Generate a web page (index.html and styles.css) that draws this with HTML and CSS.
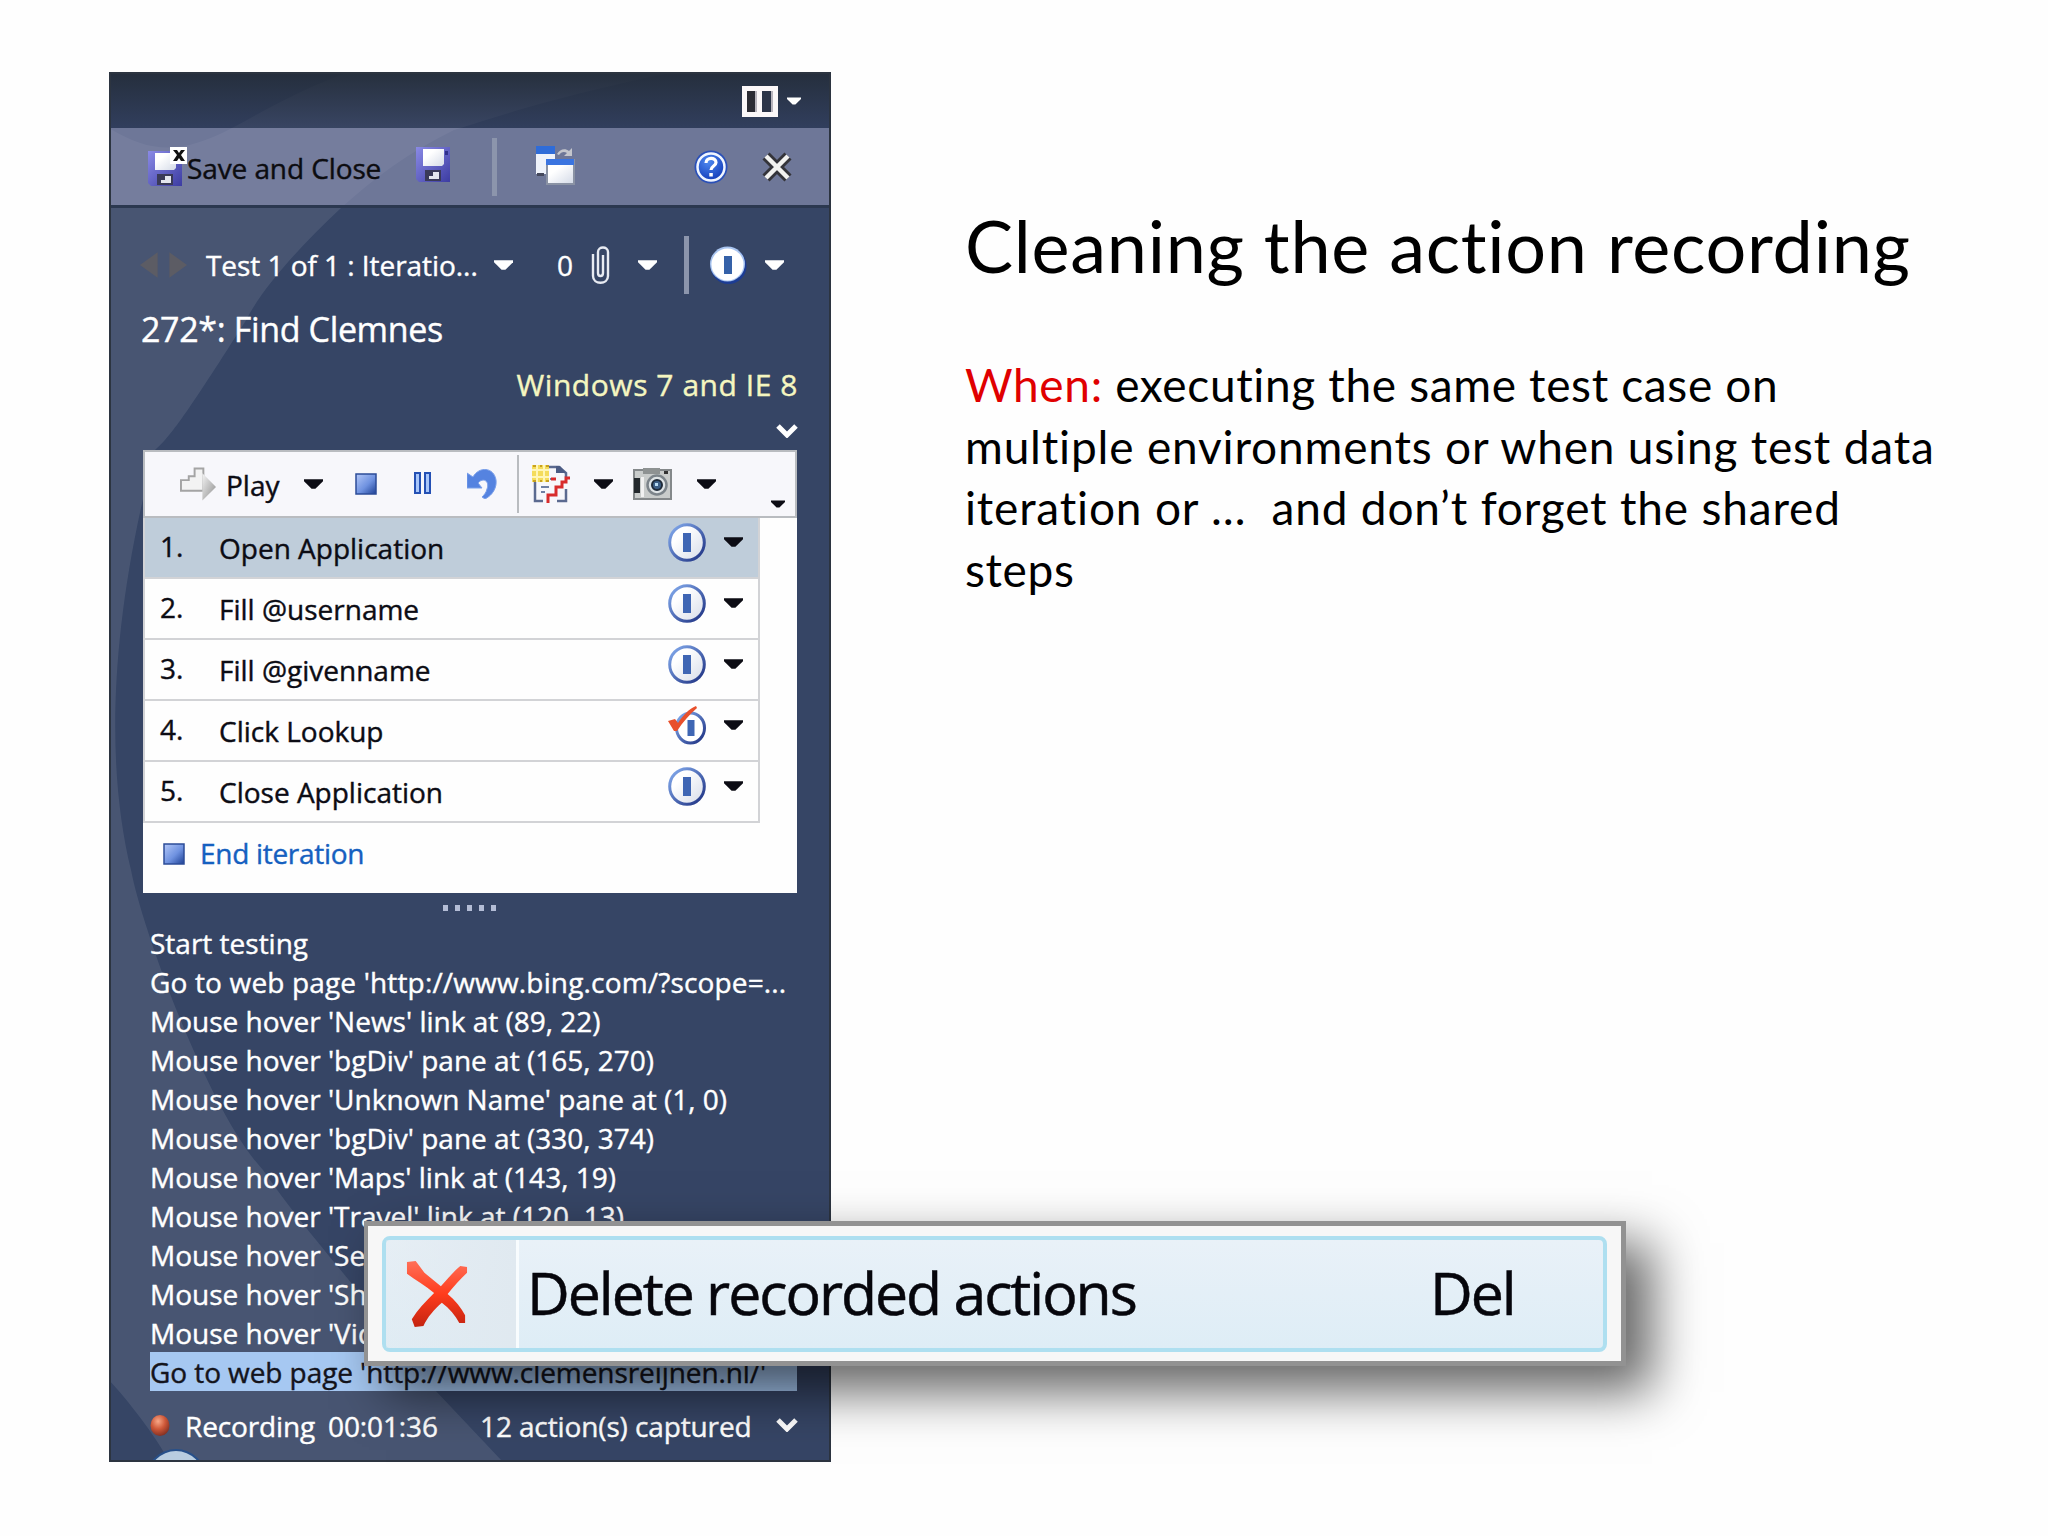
FILE: index.html
```html
<!DOCTYPE html>
<html lang="en">
<head>
    <meta charset="utf-8">
    <title>Cleaning the action recording</title>
    <link rel="stylesheet" href="styles.css">
</head>
<body>
    <!-- shared icons -->
    <svg class="defs" width="0" height="0">
        <defs>
            <linearGradient id="blueSquare" x1="0" y1="0" x2="1" y2="1">
                <stop offset="0" stop-color="#b4c8f8"/>
                <stop offset="0.55" stop-color="#6f92e0"/>
                <stop offset="1" stop-color="#1c3f94"/>
            </linearGradient>
            <linearGradient id="floppy" x1="0" y1="0" x2="1" y2="1">
                <stop offset="0" stop-color="#8a8ae6"/>
                <stop offset="1" stop-color="#3c3ca2"/>
            </linearGradient>
            <linearGradient id="ring" x1="0" y1="0" x2="1" y2="1">
                <stop offset="0" stop-color="#86aef0"/>
                <stop offset="1" stop-color="#1c2f80"/>
            </linearGradient>
            <linearGradient id="paper" x1="0" y1="0" x2="1" y2="1">
                <stop offset="0.3" stop-color="#ffffff"/>
                <stop offset="1" stop-color="#d5dbe8"/>
            </linearGradient>
            <linearGradient id="grey" x1="0" y1="0" x2="1" y2="1">
                <stop offset="0" stop-color="#f4f4f4"/>
                <stop offset="1" stop-color="#8c8c8c"/>
            </linearGradient>
            <linearGradient id="redX" x1="0" y1="0" x2="0" y2="1">
                <stop offset="0" stop-color="#ff7058"/>
                <stop offset="0.5" stop-color="#ff3c1c"/>
                <stop offset="1" stop-color="#c42410"/>
            </linearGradient>
            <radialGradient id="helpBlue" cx="0.4" cy="0.3" r="0.8">
                <stop offset="0" stop-color="#4f8af0"/>
                <stop offset="1" stop-color="#0c34b4"/>
            </radialGradient>
            <radialGradient id="recRed" cx="0.4" cy="0.3" r="0.75">
                <stop offset="0" stop-color="#f8a888"/>
                <stop offset="0.5" stop-color="#cf5838"/>
                <stop offset="1" stop-color="#7c2c20"/>
            </radialGradient>
        </defs>
        <symbol id="caret" viewBox="0 0 20 10">
            <path d="M0 0H20V2L12 10H8L0 2Z" fill="currentColor"/>
        </symbol>
        <symbol id="chevron" viewBox="0 0 22 14">
            <path d="M2 2L11 11L20 2" fill="none" stroke="currentColor" stroke-width="5"/>
        </symbol>
        <symbol id="disk" viewBox="0 0 34 35">
            <path d="M0 0H34V35H3L0 32Z" fill="url(#floppy)"/>
            <path d="M7 2H28V17L26 19H7Z" fill="url(#paper)"/>
            <rect x="9" y="23" width="16" height="11" fill="#3a3a58"/>
            <path d="M17 25H23V32H13V29H17Z" fill="#e4e6ee"/>
            <rect x="29" y="4" width="3" height="4" fill="#30308c"/>
        </symbol>
        <symbol id="step" viewBox="0 0 38 39">
            <ellipse cx="19" cy="19.5" rx="17.3" ry="17.8" fill="url(#paper)" stroke="url(#ring)" stroke-width="3"/>
            <rect x="15" y="10" width="8" height="19" fill="#3f66b4"/>
        </symbol>
        <symbol id="stepDone" viewBox="0 0 38 39">
            <ellipse cx="22.5" cy="22" rx="14" ry="15" fill="#fff" stroke="url(#ring)" stroke-width="3"/>
            <rect x="19.500" y="14" width="7" height="16" fill="#3f66b4"/>
            <path d="M0 15L7 13L10 17C15 9 21 3 28 0L29 2C21 9 15 16 9 25H6Z" fill="#e8502c"/>
        </symbol>
    </svg>

    <div class="slide">
        <div class="panel">
            <svg class="panel-art" viewBox="0 0 721 1389">
                <path d="M0 56C40 80 70 84 123 56C170 30 205 12 240 0H565C470 20 420 34 345 58C300 80 265 106 232 136C180 185 150 222 136 250C85 330 62 365 46 378C-2 560 -2 700 22 798C34 860 100 1040 154 1098C200 1165 250 1215 326 1318L393 1389H60C50 1370 25 1335 0 1308Z" fill="#ffffff" fill-opacity="0.09"/>
            </svg>

            <div class="titlebar">
                <svg class="layout-icon" viewBox="0 0 36 31">
                    <rect width="36" height="31" fill="#fbf7f8"/>
                    <rect x="5" y="5" width="9" height="21" fill="#2c2c34"/>
                    <rect x="20" y="5" width="11" height="21" fill="#2c3448"/>
                    <path d="M13 5H15V26H13ZM29 5H31V26H29Z" fill="#b8b4bc"/>
                </svg>
                <svg class="caret small"><use href="#caret"/></svg>
            </div>

            <div class="toolbar">
                <svg class="save-close-icon" viewBox="0 0 39 39">
                    <svg y="4" width="34" height="35"><use href="#disk"/></svg>
                    <rect x="22" y="0" width="17" height="17" fill="#fff"/>
                    <path d="M25 3H29L31 6L33 3H37L33 8L37 14H33L31 11L29 14H25L29 8Z" fill="#111"/>
                </svg>
                <span class="save-close">Save and Close</span>
                <svg class="save-icon"><use href="#disk"/></svg>
                <span class="divider"></span>
                <svg class="windows-icon" viewBox="0 0 39 39">
                    <rect x="0" y="0" width="19" height="28" fill="#eef2fa"/>
                    <rect x="0" y="0" width="19" height="8" fill="#2f6cd8"/>
                    <rect x="1" y="27" width="7" height="3" fill="#44485c"/>
                    <path d="M21 8C24 3 29 2 33 5L36 2V10H28L31 7C28 5 25 6 23 9Z" fill="#c4c6cc"/>
                    <rect x="10" y="13" width="29" height="26" fill="#8a92a4"/>
                    <rect x="12" y="19" width="25" height="18" fill="url(#paper)"/>
                    <rect x="10" y="13" width="28" height="6" fill="#3a74e0"/>
                </svg>
                <svg class="help-icon" viewBox="0 0 34 34">
                    <circle cx="17" cy="17" r="16.500" fill="#2a50b8"/>
                    <circle cx="17" cy="17" r="13.500" fill="url(#helpBlue)" stroke="#f0f6ff" stroke-width="2.500"/>
                    <path d="M12 13C12 7 22 7 22 12.500C22 16 17 16 17 20" fill="none" stroke="#fff" stroke-width="3.200"/>
                    <rect x="15.300" y="23" width="3.500" height="3.500" fill="#fff"/>
                </svg>
                <svg class="close-icon" viewBox="0 0 30 30">
                    <path d="M4 4L26 26M26 4L4 26" stroke="#34343a" stroke-width="10"/>
                    <path d="M4 4L26 26M26 4L4 26" stroke="#f2f2f0" stroke-width="4.500"/>
                </svg>
            </div>

            <div class="nav">
                <svg class="nav-arrows" viewBox="0 0 48 26">
                    <path d="M0 13L18 0V26ZM48 13L30 0V26Z" fill="#5c5c64"/>
                </svg>
                <span class="test-name">Test 1 of 1 : Iteratio...</span>
                <svg class="caret"><use href="#caret"/></svg>
                <span class="attach-count">0</span>
                <svg class="clip" viewBox="0 0 19 38">
                    <path d="M2 8V30C2 39 17 39 17 30V6C17 0 7 0 7 6V27C7 31 12 31 12 27V9" fill="none" stroke="#e8ebf2" stroke-width="2.400"/>
                </svg>
                <svg class="caret caret-attach"><use href="#caret"/></svg>
                <span class="divider"></span>
                <svg class="status-icon" viewBox="0 0 38 38">
                    <circle cx="19.500" cy="20" r="18" fill="#1c3c94"/>
                    <circle cx="18.500" cy="18" r="17.500" fill="#a8c4f0"/>
                    <circle cx="18.500" cy="18.500" r="16" fill="#fff"/>
                    <rect x="15" y="10" width="8" height="18" fill="#3561a8"/>
                </svg>
                <svg class="caret caret-status"><use href="#caret"/></svg>
            </div>

            <div class="case-title">272*: Find Clemnes</div>
            <div class="config">Windows 7 and IE 8</div>
            <div class="expander"><svg class="chevron"><use href="#chevron"/></svg></div>

            <div class="steps">
                <div class="play-bar">
                    <svg class="play-icon" viewBox="0 0 38 34">
                        <path d="M1 13H9V9H15V1H24V7L24 24H1Z" fill="#f3f3f3" stroke="#a4a4a4" stroke-width="2"/>
                        <path d="M23 6L37 20L23 34Z" fill="url(#grey)"/>
                    </svg>
                    <span class="play-label">Play</span>
                    <svg class="caret"><use href="#caret"/></svg>
                    <svg class="stop-icon" viewBox="0 0 22 22">
                        <rect x="1" y="1" width="20" height="20" fill="url(#blueSquare)" stroke="#2c4c98" stroke-width="1.500"/>
                    </svg>
                    <svg class="pause-icon" viewBox="0 0 17 22">
                        <path d="M1 1H6V21H1ZM11 1H16V21H11Z" fill="#a8c6fa" stroke="#2450b4" stroke-width="2"/>
                    </svg>
                    <svg class="undo-icon" viewBox="0 0 30 30">
                        <path d="M0 4V19H15L11 14C16 8 23 12 20 20C19 24 17 26 15 28L18 30C26 26 30 18 29 11C27 -2 12 -3 6 8Z" fill="#5583e0" stroke="#7ba0ea" stroke-width="1"/>
                    </svg>
                    <span class="bar-line"></span>
                    <svg class="bug-icon" viewBox="0 0 38 38">
                        <path d="M3 14V36H11M25 36H34V24M34 12V8L27 2H16" fill="none" stroke="#5b6a90" stroke-width="2.500"/>
                        <path d="M24 1H28L34 8H24Z" fill="#4c5c84"/>
                        <path d="M9 22H17M9 27H13M18 14H24" stroke="#6f80a4" stroke-width="2"/>
                        <rect x="0" y="0" width="17" height="17" fill="#f4dc5c"/>
                        <path d="M0 5H17M0 12H17M5 0V17M12 0V17" stroke="#fff6b8" stroke-width="2"/>
                        <path d="M1 1H4M8 1H10M14 1H17M1 16H4M8 16H10M14 16H17" stroke="#c8a020" stroke-width="2"/>
                        <path d="M38 13H34V17H30V22H24V30H16V38M19 14H24" fill="none" stroke="#d82c2c" stroke-width="3"/>
                    </svg>
                    <svg class="caret caret-bug"><use href="#caret"/></svg>
                    <svg class="camera-icon" viewBox="0 0 39 32">
                        <rect x="1" y="2" width="37" height="29" fill="#c9cccb" stroke="#84888a" stroke-width="2"/>
                        <rect x="10" y="0" width="17" height="6" fill="#8e9292"/>
                        <rect x="1" y="10" width="6" height="15" fill="#23282c"/>
                        <rect x="31" y="3" width="4" height="3" fill="#333"/>
                        <rect x="8" y="9" width="3" height="20" fill="#f1f1f1"/>
                        <circle cx="24" cy="17" r="9.500" fill="#dfe4e6" stroke="#7c848a" stroke-width="2.500"/>
                        <circle cx="24" cy="17" r="5" fill="#3d5f86" stroke="#1e2a38" stroke-width="2"/>
                        <rect x="22" y="15" width="3" height="3" fill="#b8dcf4"/>
                    </svg>
                    <svg class="caret caret-camera"><use href="#caret"/></svg>
                    <svg class="caret overflow"><use href="#caret"/></svg>
                </div>

                <div class="step-list">
                    <div class="step selected">
                        <span class="num">1.</span><span class="name">Open Application</span>
                        <svg class="step-icon"><use href="#step"/></svg><svg class="caret"><use href="#caret"/></svg>
                    </div>
                    <div class="step">
                        <span class="num">2.</span><span class="name">Fill @username</span>
                        <svg class="step-icon"><use href="#step"/></svg><svg class="caret"><use href="#caret"/></svg>
                    </div>
                    <div class="step">
                        <span class="num">3.</span><span class="name">Fill @givenname</span>
                        <svg class="step-icon"><use href="#step"/></svg><svg class="caret"><use href="#caret"/></svg>
                    </div>
                    <div class="step">
                        <span class="num">4.</span><span class="name">Click Lookup</span>
                        <svg class="step-icon"><use href="#stepDone"/></svg><svg class="caret"><use href="#caret"/></svg>
                    </div>
                    <div class="step">
                        <span class="num">5.</span><span class="name">Close Application</span>
                        <svg class="step-icon"><use href="#step"/></svg><svg class="caret"><use href="#caret"/></svg>
                    </div>
                </div>

                <div class="end-iteration">
                    <svg class="stop-icon" viewBox="0 0 22 22">
                        <rect x="1" y="1" width="20" height="20" fill="url(#blueSquare)" stroke="#2c4c98" stroke-width="1.500"/>
                    </svg>
                    <span>End iteration</span>
                </div>
            </div>

            <div class="grip"><i></i><i></i><i></i><i></i><i></i></div>

            <ul class="log">
                <li>Start testing</li>
                <li class="wide">Go to web page 'http://www.bing.com/?scope=...</li>
                <li>Mouse hover 'News' link at (89, 22)</li>
                <li>Mouse hover 'bgDiv' pane at (165, 270)</li>
                <li>Mouse hover 'Unknown Name' pane at (1, 0)</li>
                <li>Mouse hover 'bgDiv' pane at (330, 374)</li>
                <li>Mouse hover 'Maps' link at (143, 19)</li>
                <li>Mouse hover 'Travel' link at (120, 13)</li>
                <li>Mouse hover 'Se</li>
                <li>Mouse hover 'Sh</li>
                <li>Mouse hover 'Vid</li>
                <li class="current">Go to web page 'http://www.clemensreijnen.nl/'</li>
            </ul>

            <div class="recording">
                <svg class="rec-dot" viewBox="0 0 20 21"><ellipse cx="10" cy="10.500" rx="9.500" ry="10.500" fill="url(#recRed)"/></svg>
                <span class="rec-label">Recording</span>
                <span class="rec-time">00:01:36</span>
                <span class="rec-count">12 action(s) captured</span>
                <svg class="chevron"><use href="#chevron"/></svg>
            </div>
            <div class="orb"></div>
        </div>

        <div class="notes">
            <h1>Cleaning the action recording</h1>
            <p>
                <span class="line"><em>When:</em> executing the same test case on</span>
                <span class="line long">multiple environments or when using test data</span>
                <span class="line long">iteration or …&nbsp; and don’t forget the shared</span>
                <span class="line">steps</span>
            </p>
        </div>
    </div>

    <!-- enlarged context menu entry, lies over the panel -->
    <div class="popup">
        <div class="menu-item">
            <div class="gutter">
                <svg class="delete-icon" viewBox="0 0 64 68">
                    <path d="M1 1L10 0L19 12L36 26C43 18 50 10 56 5L63 6V12C56 19 49 26 43 34C51 41 57 48 61 56V64H55C51 56 45 49 37 43C29 50 22 58 18 67L9 68L6 60C12 50 20 42 29 33C20 25 10 20 1 13Z" fill="url(#redX)"/>
                </svg>
            </div>
            <span class="menu-label">Delete recorded actions</span>
            <span class="menu-key">Del</span>
        </div>
    </div>
</body>
</html>
```
FILE: styles.css
```css
body {
    margin: 0;
    width: 2048px;
    height: 1536px;
    background-color: #fefefe;
    font-family: 'Open Sans', 'Noto Sans', sans-serif;
    overflow: hidden;
    position: relative;
}

svg {
    display: block;
    flex: none;
}

.defs {
    position: absolute;
}

.slide {
    display: flex;
    align-items: flex-start;
    padding: 72px 0 0 109px;
}

.panel {
    width: 722px;
    height: 1390px;
    box-sizing: border-box;
    border: 2px solid #2c3440;
    background-color: #364565;
    color: #fff;
    font-size: 28px;
    -webkit-text-stroke: 0.4px;
    position: relative;
    overflow: hidden;
    flex: none;
    white-space: nowrap;
}

.panel > div, .panel > ul {
    position: relative;
}

.panel-art {
    position: absolute;
    left: -2px;
    top: -2px;
    width: 721px;
    height: 1389px;
}

.caret {
    width: 19px;
    height: 10px;
}

.chevron {
    width: 22px;
    height: 14px;
}

.divider {
    width: 5px;
    height: 58px;
    background-color: #8c95ac;
}

/* top strip */
.titlebar {
    height: 54px;
    display: flex;
    align-items: center;
    background: linear-gradient(rgba(36, 45, 58, 0.92), rgba(46, 58, 88, 0.6));
}

.layout-icon {
    width: 36px;
    height: 31px;
    margin-left: 631px;
}

.small {
    width: 14px;
    height: 8px;
    margin-left: 9px;
}

.toolbar {
    height: 77px;
    display: flex;
    align-items: center;
    background-color: rgba(146, 150, 184, 0.62);
    border-bottom: 3px solid #2b3850;
    color: #0c0c10;
}

.save-close-icon {
    width: 39px;
    height: 39px;
    margin-left: 37px;
}

.save-close {
    width: 229px;
    margin-top: 2px;
    letter-spacing: -0.1px;
}

.save-icon {
    width: 34px;
    height: 35px;
    margin-bottom: 4px;
}

.toolbar .divider {
    margin-left: 42px;
}

.windows-icon {
    width: 39px;
    height: 39px;
    margin-left: 39px;
    margin-bottom: 3px;
}

.help-icon {
    width: 34px;
    height: 34px;
    margin-left: 119px;
}

.close-icon {
    width: 30px;
    height: 30px;
    margin-left: 34px;
}

.nav {
    height: 113px;
    display: flex;
    align-items: center;
}

.nav-arrows {
    width: 47px;
    height: 26px;
    margin-left: 29px;
}

.test-name {
    width: 288px;
    margin-left: 19px;
    letter-spacing: -0.05px;
}

.attach-count {
    width: 34px;
    margin-left: 44px;
}

.clip {
    width: 19px;
    height: 38px;
}

.caret-attach {
    margin-left: 28px;
}

.nav .divider {
    margin-left: 27px;
}

.status-icon {
    width: 38px;
    height: 38px;
    margin-left: 20px;
}

.caret-status {
    margin-left: 18px;
}

.case-title {
    height: 46px;
    line-height: 46px;
    margin: -15px 0 5px;
    padding-left: 30px;
    font-size: 34px;
    letter-spacing: -0.35px;
}

.config {
    height: 56px;
    line-height: 56px;
    margin-bottom: 11px;
    padding-right: 31px;
    text-align: right;
    font-size: 30px;
    letter-spacing: 0.55px;
    color: #f5f6c0;
}

.expander {
    height: 26px;
    display: flex;
    justify-content: flex-end;
    padding-right: 31px;
}

/* test steps */
.steps {
    width: 654px;
    height: 443px;
    margin-left: 32px;
    background-color: #fefefe;
    color: #0c0c14;
}

.play-bar {
    height: 68px;
    box-sizing: border-box;
    border: 2px solid #b9bcc0;
    background-color: #f7f7fb;
    display: flex;
    align-items: center;
}

.play-icon {
    width: 37px;
    height: 34px;
    margin-left: 35px;
}

.play-label {
    width: 78px;
    margin-left: 9px;
    margin-top: 2px;
}

.play-bar .stop-icon {
    margin-left: 32px;
}

.stop-icon {
    width: 22px;
    height: 22px;
}

.pause-icon {
    width: 17px;
    height: 22px;
    margin-left: 37px;
    margin-bottom: 3px;
}

.undo-icon {
    width: 30px;
    height: 30px;
    margin-left: 36px;
}

.bar-line {
    width: 2px;
    height: 58px;
    margin-left: 20px;
    background-color: #b9bcc0;
}

.bug-icon {
    width: 38px;
    height: 38px;
    margin-left: 13px;
}

.caret-bug {
    margin-left: 24px;
}

.camera-icon {
    width: 39px;
    height: 32px;
    margin-left: 20px;
}

.caret-camera {
    margin-left: 25px;
}

.overflow {
    width: 14px;
    height: 8px;
    margin-left: 55px;
    margin-top: 40px;
}

.step-list {
    width: 617px;
    box-sizing: border-box;
    border: 2px solid #d2d3d6;
    border-top: none;
}

.step {
    height: 59px;
    display: flex;
    align-items: center;
    border-bottom: 2px solid #d2d3d6;
}

.step:last-child {
    border-bottom: none;
}

.selected {
    background-color: #bfcdda;
}

.num {
    width: 59px;
    margin-left: 15px;
    margin-top: -4px;
}

.name {
    width: 449px;
}

.step-icon {
    width: 38px;
    height: 39px;
    margin-bottom: 11px;
}

.step .caret {
    margin-left: 18px;
    margin-bottom: 11px;
}

.end-iteration {
    height: 64px;
    display: flex;
    align-items: center;
    gap: 15px;
    padding-left: 20px;
    color: #1560c0;
    letter-spacing: -0.3px;
}

.end-iteration span {
    margin-top: -4px;
}

.end-iteration .stop-icon {
    margin-top: -2px;
}

.grip {
    height: 30px;
    box-sizing: border-box;
    padding: 12px 2px 0 0;
    display: flex;
    justify-content: center;
    gap: 7px;
}

.grip i {
    width: 5px;
    height: 6px;
    background-color: #b4bdd6;
}

/* recorded actions */
.log {
    list-style: none;
    margin: 0 32px 0 39px;
    padding: 0;
}

.log li {
    height: 39px;
    line-height: 41px;
}

.log .wide {
    letter-spacing: 0.16px;
}

.log .current {
    background-color: #a6c8f2;
    color: #14141c;
    letter-spacing: -0.08px;
}

.recording {
    height: 68px;
    display: flex;
    align-items: center;
    letter-spacing: -0.12px;
}

.rec-dot {
    width: 20px;
    height: 21px;
    margin-left: 39px;
}

.rec-label {
    width: 143px;
    margin-left: 15px;
    margin-top: 2px;
}

.rec-time {
    width: 152px;
    margin-top: 2px;
}

.rec-count {
    width: 296px;
    margin-top: 2px;
}

.orb {
    width: 56px;
    height: 56px;
    margin: -8px 0 0 37px;
    border-radius: 50%;
    background-color: #b9cde0;
    box-shadow: 0 0 0 2px #27508a;
}

/* right hand text */
.notes {
    font-family: Lato, sans-serif;
    font-variant-ligatures: none;
    color: #000;
    margin-left: 134px;
    white-space: nowrap;
}

h1 {
    margin: 0;
    padding-top: 124px;
    font-size: 72px;
    line-height: 98px;
    font-weight: normal;
    letter-spacing: 0.72px;
}

p {
    margin: 60px 0 0;
    font-size: 46px;
    line-height: 61.5px;
    letter-spacing: 0.65px;
}

.line {
    display: block;
}

.long {
    letter-spacing: 0.82px;
}

em {
    font-style: normal;
    color: #e00000;
}

/* context menu */
.popup {
    position: absolute;
    left: 364px;
    top: 1221px;
    width: 1262px;
    height: 145px;
    box-sizing: border-box;
    border: 5px solid #929292;
    border-width: 5px 5px 5px 4px;
    background-color: #f7f7f7;
    padding: 10px 14px 9px;
    box-shadow: 24px 24px 48px 2px rgba(0, 0, 0, 0.6);
}

.menu-item {
    height: 116px;
    box-sizing: border-box;
    border: 4px solid #aedff0;
    border-radius: 8px;
    background: linear-gradient(#e9f1f8, #deedf6);
    display: flex;
    align-items: center;
    color: #06060c;
    font-size: 59px;
    letter-spacing: -2.05px;
    white-space: nowrap;
    -webkit-text-stroke: 0.5px;
}

.gutter {
    width: 133px;
    height: 108px;
    box-sizing: border-box;
    border-right: 3px solid #f8fcfe;
    background: linear-gradient(90deg, rgba(226, 234, 240, 0.4), #e0e9f0);
    display: flex;
    align-items: center;
}

.delete-icon {
    width: 62px;
    height: 68px;
    margin-left: 20px;
}

.menu-label {
    width: 903px;
    margin-left: 8px;
    margin-top: -5px;
}

.menu-key {
    margin-top: -5px;
}
```
